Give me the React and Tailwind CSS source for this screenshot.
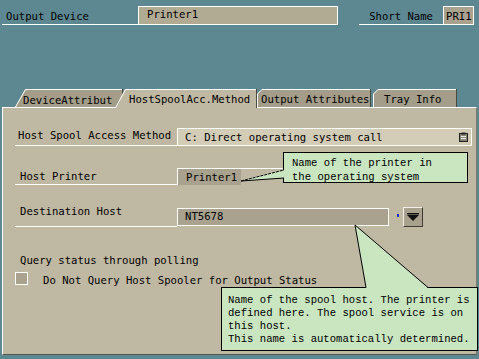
import React from "react";

const UI = { fontFamily: '"DejaVu Sans Mono", "Liberation Mono", monospace' };
const TIP = { fontFamily: '"Liberation Mono", "DejaVu Sans Mono", monospace' };

function Tab({ w, h = 18, label, pl, pt, active, rounded, className = "" }) {
  const fill = active ? "#bfb8a2" : "#a39d89";
  const pts = rounded
    ? `0,${h} 0,5 5,0 ${w},0 ${w},${h}`
    : `0,${h} 10,0 ${w},0 ${w},${h}`;
  const edge = rounded
    ? `0.5,${h} 0.5,5 5,0.5 ${w - 1},0.5`
    : `0.5,${h} 10.5,0.5 ${w - 1},0.5`;
  return (
    <div className={`relative shrink-0 ${className}`} style={{ width: w, height: h }}>
      <svg className="absolute inset-0" width={w} height={h}>
        <polygon points={pts} fill={fill} />
        <polyline points={edge} fill="none" stroke="#ffffff" strokeWidth="1" />
        <line x1={w - 0.5} y1="0" x2={w - 0.5} y2={h} stroke="#4a4a40" strokeWidth="1" />
      </svg>
      <div className="relative leading-[13px] whitespace-nowrap text-black" style={{ paddingLeft: pl, paddingTop: pt }}>
        {label}
      </div>
    </div>
  );
}

export default function App() {
  return (
    <div className="relative w-[479px] h-[359px] overflow-hidden bg-[#5d8892] text-[10.6px] text-black" style={UI}>
      {/* top row */}
      <div className="flex items-start pt-[6px]">
        <div className="ml-[2px] w-[136px] h-[19px] border-b border-white pl-[4px] pt-[4px] leading-[13px] whitespace-nowrap">
          Output Device
        </div>
        <div className="w-[200px] h-[19px] border border-white bg-[#b2ab94] pl-[8px] pt-[1px] leading-[13px]">
          Printer1
        </div>
        <div className="ml-[21px] w-[84px] h-[19px] border-b border-white pr-[10px] pt-[4px] leading-[13px] text-right whitespace-nowrap">
          Short Name
        </div>
        <div className="w-[31px] h-[19px] border border-white bg-[#a9a28e] pl-[2px] pt-[3px] leading-[13px]">
          PRI1
        </div>
      </div>

      {/* tabs */}
      <div className="relative z-10 mt-[64px] mb-[-1px] flex items-start h-[19px]">
        <Tab w={108} label="DeviceAttribut" pl={8} pt={5} className="ml-[15px]" />
        <Tab w={142} h={19} label="HostSpoolAcc.Method" pl={14} pt={4} active className="ml-[-8px]" />
        <Tab w={114} label="Output Attributes" pl={4} pt={4} rounded />
        <Tab w={84} label="Tray Info" pl={11} pt={4} rounded className="ml-[2px]" />
      </div>

      {/* panel */}
      <div className="ml-[2px] w-[475px] h-[248px] bg-[#bfb8a2] border-l border-t border-white border-r border-r-[#7d786a] border-b border-b-[#55554a]">
        {/* row 1 */}
        <div className="mt-[20px] flex h-[18px]">
          <div className="ml-[12px] w-[162px] h-[18px] border-b border-white pl-[3px] pt-[1px] leading-[13px] whitespace-nowrap">
            Host Spool Access Method
          </div>
          <div className="w-[295px] h-[18px] border border-white bg-[#d3ccb7] pl-[7px] pr-[3px] flex items-start justify-between">
            <span className="leading-[13px] pt-[2px] whitespace-nowrap">C: Direct operating system call</span>
            <svg width="9" height="10" viewBox="0 0 9 10" className="mt-[3px]">
              <rect x="0.5" y="1.5" width="8" height="8" fill="#8a8676" stroke="#222" />
              <rect x="2.5" y="0.5" width="4" height="2" fill="#222" />
              <line x1="2" y1="4.5" x2="7" y2="4.5" stroke="#eee" />
              <line x1="2" y1="6.5" x2="7" y2="6.5" stroke="#eee" />
            </svg>
          </div>
        </div>

        {/* row 2 */}
        <div className="mt-[22px] flex h-[17px]">
          <div className="ml-[12px] w-[162px] h-[17px] border-b border-white pl-[5px] pt-[2px] leading-[13px] whitespace-nowrap">
            Host Printer
          </div>
          <div className="w-[64px] h-[17px] border-t border-l border-white bg-[#a9a28e] pl-[8px] pt-[2px] leading-[13px]">
            Printer1
          </div>
          <div className="w-[42px] h-px bg-white" />
        </div>

        {/* row 3 */}
        <div className="mt-[19px] flex items-start h-[23px]">
          <div className="ml-[12px] w-[162px] h-[23px] border-b border-white pl-[5px] pt-[1px] leading-[13px] whitespace-nowrap">
            Destination Host
          </div>
          <div className="mt-[4px] w-[212px] h-[18px] border border-white bg-[#a9a28e] pl-[7px] pt-[1px] leading-[13px]">
            NT5678
          </div>
          <div className="ml-[8px] mt-[10px] w-[2px] h-[3px] bg-[#1a2bd0]" />
          <div className="ml-[4px] mt-[3px] w-[20px] h-[20px] bg-[#a8a18d] border border-t-[#f0f0e8] border-l-[#f0f0e8] border-r-[#3d3d35] border-b-[#3d3d35] flex items-center justify-center">
            <svg width="12" height="8" viewBox="0 0 12 8">
              <rect x="0" y="0" width="12" height="1.5" fill="#111" />
              <polygon points="0,2 12,2 6,8" fill="#111" />
            </svg>
          </div>
        </div>

        {/* row 4 */}
        <div className="mt-[27px] ml-[17px] h-[13px] leading-[13px] whitespace-nowrap">
          Query status through polling
        </div>

        {/* row 5 */}
        <div className="mt-[5px] flex items-start h-[14px]">
          <div className="ml-[12px] w-[13px] h-[13px] border border-white bg-[#a9a28e]" />
          <div className="ml-[15px] pt-[2px] leading-[13px] whitespace-nowrap">
            Do Not Query Host Spooler for Output Status
          </div>
        </div>
      </div>

      {/* tooltip 1 */}
      <div
        className="absolute left-[283px] top-[152px] w-[185px] h-[31px] bg-[#c9e6c1] border border-black pl-[8px] pt-[3px] text-[10.6px] leading-[14px] z-20"
        style={TIP}
      >
        <div className="whitespace-nowrap">Name of the printer in</div>
        <div className="whitespace-nowrap">the operating system</div>
      </div>

      {/* tooltip 2 */}
      <div
        className="absolute left-[221px] top-[287px] w-[257px] h-[64px] bg-[#c9e6c1] border border-black pl-[6px] pt-[6px] text-[10.6px] leading-[13px] z-20"
        style={TIP}
      >
        <div className="whitespace-nowrap">Name of the spool host. The printer is</div>
        <div className="whitespace-nowrap">defined here. The spool service is on</div>
        <div className="whitespace-nowrap">this host.</div>
        <div className="whitespace-nowrap">This name is automatically determined.</div>
      </div>

      {/* pointers */}
      <svg className="absolute inset-0 z-30 pointer-events-none" width="479" height="359">
        <polygon points="241,181 284,170 284,178" fill="#c9e6c1" />
        <line x1="241" y1="181" x2="284" y2="170" stroke="#000" strokeWidth="1" strokeDasharray="3 1" />
        <line x1="241" y1="181" x2="284" y2="178" stroke="#000" strokeWidth="1" />
        <polygon points="355,225 366,288 428,288" fill="#c9e6c1" />
        <line x1="355" y1="225" x2="366" y2="287.5" stroke="#000" strokeWidth="1" />
        <line x1="355" y1="225" x2="428" y2="287.5" stroke="#000" strokeWidth="1" />
      </svg>
    </div>
  );
}
